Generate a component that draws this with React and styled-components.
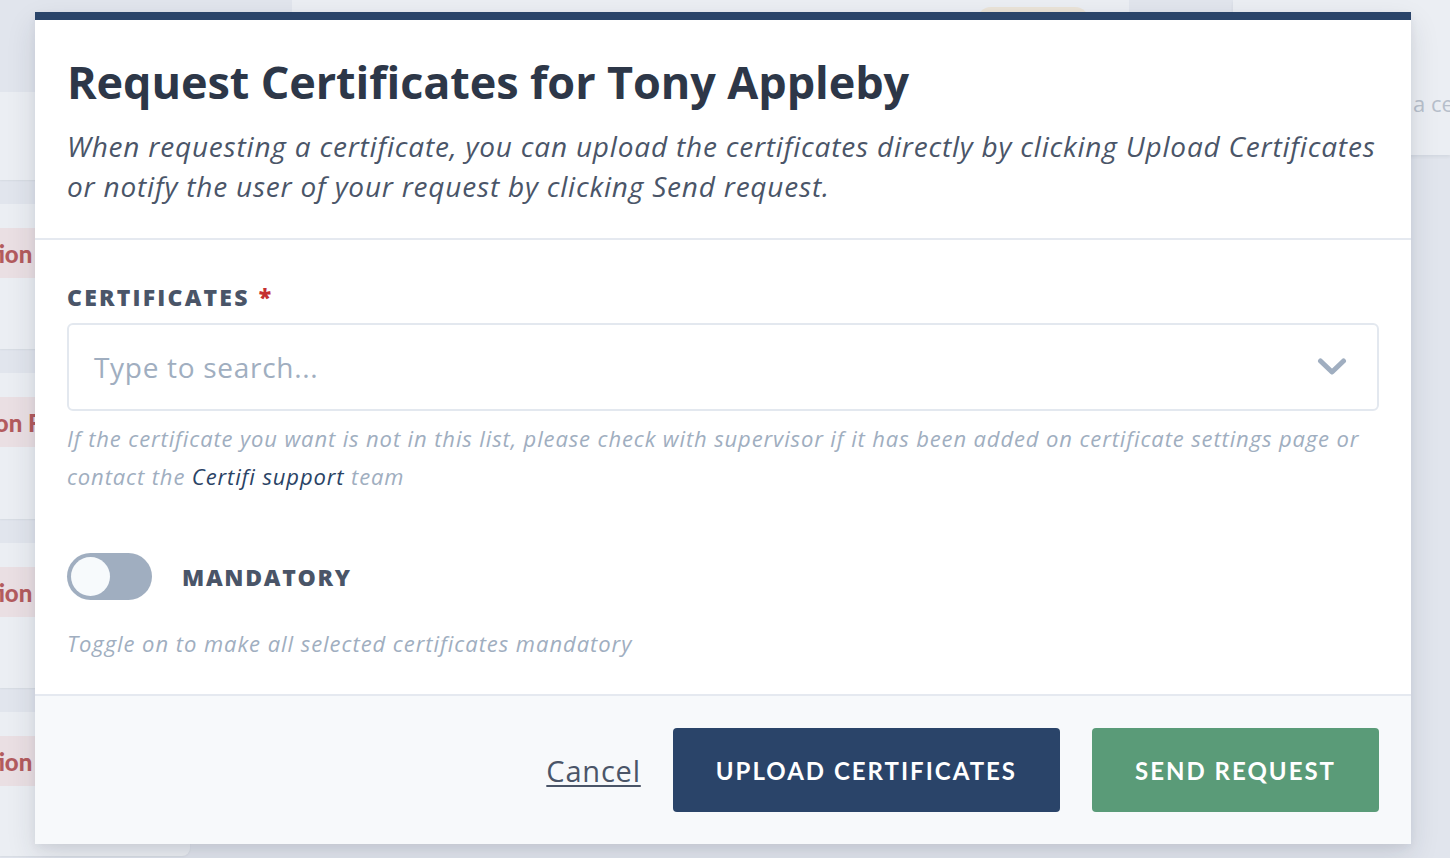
import React from "react";
import styled, { createGlobalStyle } from "styled-components";

const Global = createGlobalStyle`
  html, body { margin: 0; padding: 0; }
  body {
    font-family: "Open Sans", Lato, "Liberation Sans", sans-serif;
    background: #e1e5ed;
    -webkit-font-smoothing: antialiased;
  }
  * { box-sizing: border-box; }
`;

const Stage = styled.div`
  position: relative;
  width: 1450px;
  height: 858px;
  overflow: hidden;
  background: #e1e5ed;
`;

/* ---------- dimmed page behind the modal ---------- */
const Backdrop = styled.div`
  display: flex;
  align-items: flex-start;
  height: 100%;
`;

const LeftColumn = styled.div`
  width: 190px;
  flex: none;
  display: flex;
  flex-direction: column;
  gap: 24px;
  padding-top: 92px;
`;

const RowCard = styled.div`
  height: ${(p) => p.$h}px;
  background: #ebeef3;
  border-radius: 0 0 8px 0;
  padding-top: 24px;
  overflow: hidden;
  box-shadow: 0 1px 2px rgba(40, 50, 70, 0.06);
`;

const StatusTag = styled.div`
  height: 50px;
  width: 150px;
  margin-left: ${(p) => p.$shift}px;
  background: #eadfe3;
  color: #b35b5e;
  font-family: Lato, sans-serif;
  font-weight: 900;
  font-size: 24px;
  display: flex;
  align-items: center;
  white-space: nowrap;
`;

const MainCard = styled.div`
  margin-left: 102px;
  width: 837px;
  height: 320px;
  flex: none;
  background: #ebeef3;
  display: flex;
  justify-content: flex-end;
  padding: 7px 40px 0 0;
`;

const Pill = styled.div`
  width: 112px;
  height: 30px;
  border-radius: 14px;
  background: #ebe4d8;
`;

const RightCard = styled.div`
  margin-left: 104px;
  flex: 1;
  height: 155px;
  background: #ebeef3;
  box-shadow: 0 2px 3px rgba(40, 50, 70, 0.07);
  padding: 88px 0 0 180px;
  color: #b7bfcb;
  font-size: 22px;
  white-space: nowrap;
  overflow: hidden;
`;

/* ---------- modal ---------- */
const Modal = styled.div`
  position: absolute;
  left: 35px;
  top: 12px;
  width: 1376px;
  background: #ffffff;
  border-top: 8px solid #2a4469;
  box-shadow: 0 12px 28px rgba(30, 40, 60, 0.12), 0 3px 8px rgba(30, 40, 60, 0.06);
`;

const Header = styled.div`
  padding: 34px 32px 32px;
  border-bottom: 2px solid #e5e9f0;
`;

const Title = styled.h1`
  margin: 0;
  font-size: 45px;
  line-height: 56px;
  font-weight: 700;
  letter-spacing: -0.1px;
  color: #2d3748;
`;

const Subtitle = styled.p`
  margin: 16px 0 0;
  font-size: 28px;
  line-height: 40px;
  font-style: italic;
  letter-spacing: 0.8px;
  color: #4a5568;
  white-space: nowrap;
`;

const Body = styled.div`
  padding: 43px 32px 32px;
  border-bottom: 2px solid #e5e9f0;
`;

const FieldLabel = styled.div`
  font-size: 23px;
  line-height: 28px;
  font-weight: 800;
  letter-spacing: 2.2px;
  text-transform: uppercase;
  color: #4a5568;
`;

const Required = styled.span`
  color: #c53030;
  margin-left: 9px;
`;

const SelectBox = styled.div`
  margin-top: 12px;
  height: 88px;
  border: 2px solid #e3e8ef;
  border-radius: 6px;
  display: flex;
  align-items: center;
  justify-content: space-between;
  padding: 0 30px 0 25px;
`;

const Placeholder = styled.span`
  font-size: 28px;
  letter-spacing: 0.7px;
  color: #a0aec0;
`;

const HelpText = styled.p`
  margin: 8px 0 0;
  font-size: 22px;
  line-height: 38px;
  font-style: italic;
  letter-spacing: 0.88px;
  color: #a0aec0;
  white-space: nowrap;
`;

const Link = styled.a`
  color: #2a4365;
  text-decoration: none;
`;

const ToggleRow = styled.div`
  margin-top: 58px;
  display: flex;
  align-items: center;
  gap: 30px;
`;

const Switch = styled.div`
  width: 85px;
  height: 47px;
  border-radius: 24px;
  background: #a0aec0;
  padding: 4px;
  display: flex;
  align-items: center;
`;

const Knob = styled.div`
  width: 39px;
  height: 39px;
  border-radius: 50%;
  background: #f7fafc;
`;

const ToggleLabel = styled.span`
  font-size: 23px;
  font-weight: 800;
  letter-spacing: 1.7px;
  color: #4a5568;
`;

const ToggleHint = styled(HelpText)`
  margin-top: 24px;
  letter-spacing: 0.95px;
`;

const Footer = styled.div`
  background: #f7f9fb;
  padding: 32px;
  display: flex;
  justify-content: flex-end;
  align-items: center;
  gap: 32px;
`;

const CancelLink = styled.a`
  font-size: 29px;
  letter-spacing: 0.8px;
  color: #4a5568;
  text-decoration: underline;
  text-underline-offset: 3px;
  text-decoration-thickness: 2px;
`;

const Button = styled.button`
  height: 84px;
  padding: 0 43px;
  border: none;
  border-radius: 4px;
  background: ${(p) => p.$bg};
  color: #ffffff;
  font-family: Lato, sans-serif;
  font-size: 24px;
  font-weight: 700;
  letter-spacing: 2px;
  text-transform: uppercase;
`;

function Chevron() {
  return (
    <svg width="30" height="20" viewBox="0 0 30 20" fill="none">
      <path
        d="M3.5 4 L15 15 L26.5 4"
        stroke="#a0aec0"
        strokeWidth="5"
        strokeLinecap="round"
        strokeLinejoin="round"
      />
    </svg>
  );
}

export default function App() {
  const rows = [
    { h: 88, tag: null },
    { h: 145, tag: "Action", shift: -39 },
    { h: 146, tag: "Action F", shift: -49 },
    { h: 145, tag: "Action", shift: -39 },
    { h: 144, tag: "Action", shift: -39 },
  ];
  return (
    <>
      <Global />
      <Stage>
        <Backdrop>
          <LeftColumn>
            {rows.map((r, i) => (
              <RowCard key={i} $h={r.h}>
                {r.tag && <StatusTag $shift={r.shift}>{r.tag}</StatusTag>}
              </RowCard>
            ))}
          </LeftColumn>
          <MainCard>
            <Pill />
          </MainCard>
          <RightCard>a certificate</RightCard>
        </Backdrop>

        <Modal>
          <Header>
            <Title>Request Certificates for Tony Appleby</Title>
            <Subtitle>
              When requesting a certificate, you can upload the certificates directly by clicking Upload Certificates
              <br />
              or notify the user of your request by clicking Send request.
            </Subtitle>
          </Header>
          <Body>
            <FieldLabel>
              Certificates<Required>*</Required>
            </FieldLabel>
            <SelectBox>
              <Placeholder>Type to search...</Placeholder>
              <Chevron />
            </SelectBox>
            <HelpText>
              If the certificate you want is not in this list, please check with supervisor if it has been added on
              certificate settings page or
              <br />
              contact the <Link href="#">Certifi support</Link> team
            </HelpText>
            <ToggleRow>
              <Switch>
                <Knob />
              </Switch>
              <ToggleLabel>MANDATORY</ToggleLabel>
            </ToggleRow>
            <ToggleHint>Toggle on to make all selected certificates mandatory</ToggleHint>
          </Body>
          <Footer>
            <CancelLink href="#">Cancel</CancelLink>
            <Button $bg="#2a4469">Upload Certificates</Button>
            <Button $bg="#5a9b78">Send Request</Button>
          </Footer>
        </Modal>
      </Stage>
    </>
  );
}
